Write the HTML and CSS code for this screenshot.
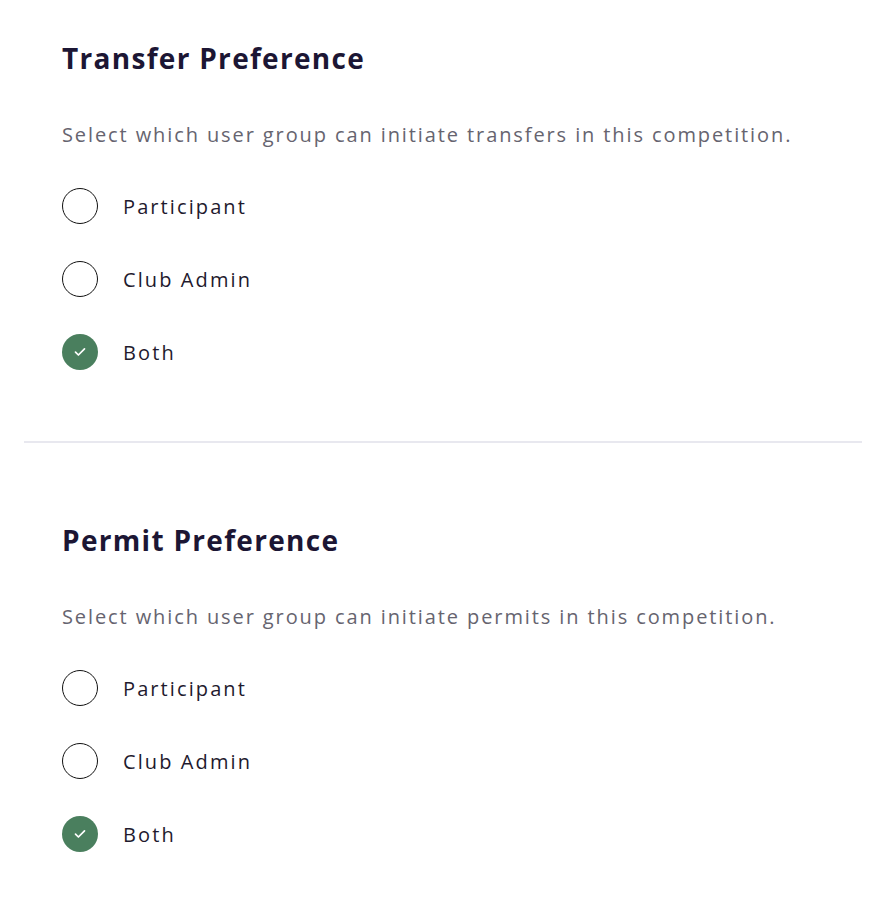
FILE: index.html
```html
<!DOCTYPE html>
<html lang="en">
<head>
<meta charset="utf-8">
<title>Preferences</title>
<link rel="stylesheet" href="styles.css">
</head>
<body>
<main class="page">
  <section class="section">
    <h2 class="title">Transfer Preference</h2>
    <p class="desc">Select which user group can initiate transfers in this competition.</p>
    <div class="options" role="radiogroup">
      <label class="option"><span class="radio"></span><span class="label">Participant</span></label>
      <label class="option"><span class="radio"></span><span class="label">Club Admin</span></label>
      <label class="option"><span class="radio checked"><svg viewBox="0 0 12 10" width="12" height="10"><path d="M1.5 5.2 L4.4 8 L10.5 1.8" fill="none" stroke="#fff" stroke-width="1.7" stroke-linecap="round" stroke-linejoin="round"/></svg></span><span class="label">Both</span></label>
    </div>
  </section>
  <hr class="divider">
  <section class="section second">
    <h2 class="title">Permit Preference</h2>
    <p class="desc">Select which user group can initiate permits in this competition.</p>
    <div class="options" role="radiogroup">
      <label class="option"><span class="radio"></span><span class="label">Participant</span></label>
      <label class="option"><span class="radio"></span><span class="label">Club Admin</span></label>
      <label class="option"><span class="radio checked"><svg viewBox="0 0 12 10" width="12" height="10"><path d="M1.5 5.2 L4.4 8 L10.5 1.8" fill="none" stroke="#fff" stroke-width="1.7" stroke-linecap="round" stroke-linejoin="round"/></svg></span><span class="label">Both</span></label>
    </div>
  </section>
</main>
</body>
</html>
```
FILE: styles.css
```css
html, body {
  margin: 0;
  padding: 0;
  background: #ffffff;
}
body {
  font-family: "Open Sans", "Lato", sans-serif;
  color: #1d1830;
}
.page {
  margin-left: 24px;
  width: 838px;
}
.section {
  padding: 40px 0 0 38px;
}
.section.second {
  padding-top: 79px;
}
.title {
  margin: 0;
  font-size: 28px;
  line-height: 36px;
  font-weight: 700;
  letter-spacing: 1.3px;
  color: #1c1634;
}
.desc {
  margin: 45px 0 0;
  font-size: 20px;
  line-height: 28px;
  color: #66646f;
  letter-spacing: 1.9px;
}
.options {
  margin-top: 39px;
  display: flex;
  flex-direction: column;
  gap: 37px;
}
.option {
  display: flex;
  align-items: center;
  height: 36px;
  gap: 25px;
}
.radio {
  box-sizing: border-box;
  width: 36px;
  height: 36px;
  border-radius: 50%;
  border: 1.5px solid #111;
  display: flex;
  align-items: center;
  justify-content: center;
  flex: none;
}
.radio.checked {
  border: none;
  background: #4a7f5e;
}
.label {
  font-size: 20px;
  letter-spacing: 2.1px;
  color: #1f1a2e;
}
.divider {
  margin: 71px 0 0;
  border: none;
  height: 2px;
  background: #e8e8ef;
}
```
